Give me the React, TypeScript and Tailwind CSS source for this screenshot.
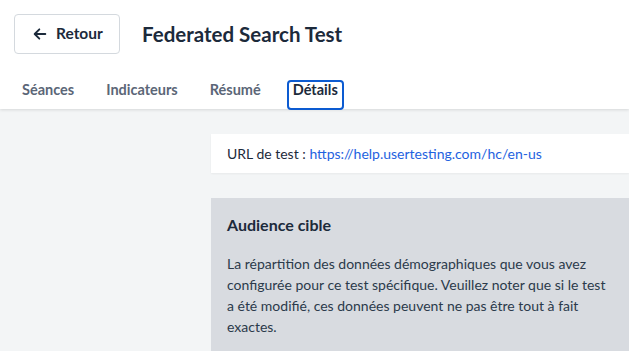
import React from 'react';

const tabs = ['Séances', 'Indicateurs', 'Résumé', 'Détails'];

export default function App() {
  return (
    <div className="w-[629px] h-[351px] overflow-hidden bg-[#f3f5f6] text-[#1c2a3b]" style={{ fontFamily: 'Lato, "Open Sans", sans-serif' }}>
      {/* Header */}
      <div className="bg-white h-[109px] shadow-[0_1px_3px_rgba(0,0,0,0.12)] relative">
        <div className="flex items-center pt-[14px] pl-[14px]">
          <button className="flex items-center gap-[8px] h-[40px] w-[106px] pl-[17px] border border-[#d4d9de] rounded-[4px] bg-white text-[15.5px] font-bold">
            <svg className="w-[16px] h-[16px]" viewBox="0 0 24 24" fill="none" stroke="currentColor" strokeWidth="2.8" strokeLinecap="round" strokeLinejoin="round">
              <path d="M20 12H5M11 5l-7 7 7 7" />
            </svg>
            Retour
          </button>
          <h1 className="ml-[22px] text-[20.5px] font-bold">Federated Search Test</h1>
        </div>
        <div className="flex items-start mt-[26px] pl-[22px] h-[29px]">
          {tabs.map((t) => (
            <div
              key={t}
              className={
                t === 'Détails'
                  ? '-ml-[6px] h-[30px] px-[4px] border-2 border-[#0c5bd1] rounded-[4px] text-[14.5px] font-bold text-[#1c2a3b] leading-[16px]'
                  : 'mr-[32px] text-[14.5px] font-bold text-[#5b6677] leading-[16px] pt-[2px]'
              }
            >
              {t}
            </div>
          ))}
        </div>
      </div>

      {/* Content */}
      <div className="pl-[211px] pt-[25px]">
        <div className="bg-white h-[39px] flex items-center pl-[16px] text-[14px] shadow-[0_1px_2px_rgba(0,0,0,0.05)]">
          <span>URL de test :&nbsp;</span>
          <a className="text-[#1e62e0]">https://help.usertesting.com/hc/en-us</a>
        </div>
        <div className="mt-[25px] bg-[#d8dbe0] pl-[16px] pr-[20px] pt-[16px] pb-[20px]">
          <h2 className="text-[16px] font-bold leading-[22px]">Audience cible</h2>
          <p className="mt-[17px] text-[14px] leading-[21px] text-[#2b3a4b] w-[386px]">
            La répartition des données démographiques que vous avez configurée pour ce test spécifique. Veuillez noter que si le test a été modifié, ces données peuvent ne pas être tout à fait exactes.
          </p>
        </div>
      </div>
    </div>
  );
}
